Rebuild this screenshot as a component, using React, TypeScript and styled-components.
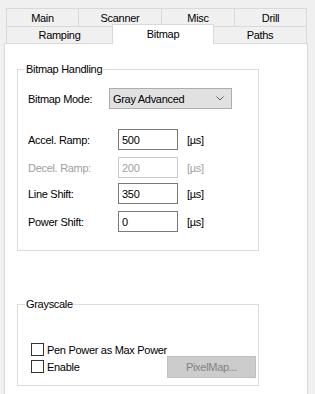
import React from "react";
import styled, { createGlobalStyle } from "styled-components";

const GlobalStyle = createGlobalStyle`
  html, body {
    margin: 0;
    padding: 0;
    background: #f0f0f0;
  }
  body {
    font-family: "Liberation Sans", Arial, sans-serif;
    font-size: 11px;
    letter-spacing: -0.3px;
    color: #000;
  }
`;

const Page = styled.div`
  box-sizing: border-box;
  width: 315px;
  height: 394px;
  overflow: hidden;
  padding: 8px 0 0 4px;
  background: #f0f0f0;
`;

const TabStrip = styled.div`
  margin-left: 2px;
`;

const TabRow = styled.div<{ $second?: boolean }>`
  display: flex;
  align-items: flex-start;
  height: ${(p) => (p.$second ? 18 : 19)}px;
  margin-top: ${(p) => (p.$second ? -1 : 0)}px;
`;

const Tab = styled.div<{ $w: number; $h: number; $active?: boolean }>`
  box-sizing: border-box;
  display: flex;
  align-items: center;
  justify-content: center;
  flex: none;
  width: ${(p) => p.$w}px;
  height: ${(p) => (p.$active ? 20 : p.$h)}px;
  margin-left: -1px;
  margin-top: ${(p) => (p.$active ? -2 : 0)}px;
  padding-bottom: ${(p) => (p.$active ? 2 : 0)}px;
  border: 1px solid #d9d9d9;
  border-bottom: ${(p) => (p.$active ? "none" : "1px solid #d9d9d9")};
  background: ${(p) => (p.$active ? "#fff" : "#f0f0f0")};
  position: ${(p) => (p.$active ? "relative" : "static")};
  z-index: ${(p) => (p.$active ? 1 : "auto")};
  &:first-child {
    margin-left: 0;
  }
`;

const Panel = styled.div`
  box-sizing: border-box;
  width: 304px;
  height: 360px;
  margin-top: -1px;
  padding: 19px 0 0 12px;
  background: #fff;
  border: 1px solid #d9d9d9;
`;

const Group = styled.fieldset<{ $h: number; $gap?: number }>`
  box-sizing: border-box;
  width: 242px;
  height: ${(p) => p.$h}px;
  min-width: 0;
  margin: ${(p) => p.$gap ?? 0}px 0 0 0;
  padding: 0 0 0 10px;
  border: 1px solid #dcdcdc;
`;

const Legend = styled.legend`
  margin-left: -3px;
  padding: 0 1px;
  line-height: 13px;
`;

const ModeRow = styled.div`
  display: flex;
  align-items: center;
  margin-top: 12px;
  height: 21px;
`;

const ModeLabel = styled.span`
  width: 81px;
  flex: none;
`;

const Select = styled.div`
  box-sizing: border-box;
  display: flex;
  align-items: center;
  justify-content: space-between;
  width: 123px;
  height: 21px;
  padding: 0 7px 0 3px;
  background: #e1e1e1;
  border: 1px solid #adadad;
`;

const FieldRow = styled.div<{ $gap: number; $disabled?: boolean }>`
  display: grid;
  grid-template-columns: 90px 60px auto;
  align-items: center;
  height: 21px;
  margin-top: ${(p) => p.$gap}px;
  color: ${(p) => (p.$disabled ? "#a0a0a0" : "#000")};
`;

const TextBox = styled.div<{ $disabled?: boolean }>`
  box-sizing: border-box;
  height: 21px;
  padding: 0 3px;
  display: flex;
  align-items: center;
  background: #fff;
  border: 1px solid ${(p) => (p.$disabled ? "#cccccc" : "#7a7a7a")};
`;

const Unit = styled.span`
  margin-left: 9px;
`;

const Checks = styled.div`
  margin-top: 30px;
  padding-left: 3px;
  padding-right: 2px;
`;

const CheckRow = styled.div`
  display: flex;
  align-items: center;
  justify-content: space-between;
  height: 17px;
`;

const CheckLabel = styled.label`
  display: flex;
  align-items: center;
  gap: 3px;
`;

const Box = styled.span`
  box-sizing: border-box;
  width: 13px;
  height: 13px;
  background: #fff;
  border: 1px solid #333;
`;

const Button = styled.div`
  box-sizing: border-box;
  display: flex;
  align-items: center;
  justify-content: center;
  width: 89px;
  height: 22px;
  background: #cccccc;
  border: 1px solid #bfbfbf;
  color: #838383;
`;

const Chevron = () => (
  <svg width="8" height="5" viewBox="0 0 8 5">
    <polyline points="0.5,0.5 4,4 7.5,0.5" fill="none" stroke="#606060" strokeWidth="1" />
  </svg>
);

const fields = [
  { label: "Accel. Ramp:", value: "500", gap: 20 },
  { label: "Decel. Ramp:", value: "200", gap: 7, disabled: true },
  { label: "Line Shift:", value: "350", gap: 5 },
  { label: "Power Shift:", value: "0", gap: 7 },
];

export default function App() {
  return (
    <Page>
      <GlobalStyle />
      <TabStrip>
        <TabRow>
          <Tab $w={73} $h={19}>Main</Tab>
          <Tab $w={84} $h={19}>Scanner</Tab>
          <Tab $w={74} $h={19}>Misc</Tab>
          <Tab $w={73} $h={19}>Drill</Tab>
        </TabRow>
        <TabRow $second>
          <Tab $w={107} $h={18}>Ramping</Tab>
          <Tab $w={102} $h={18} $active>Bitmap</Tab>
          <Tab $w={94} $h={18}>Paths</Tab>
        </TabRow>
      </TabStrip>
      <Panel>
        <Group $h={188}>
          <Legend>Bitmap Handling</Legend>
          <ModeRow>
            <ModeLabel>Bitmap Mode:</ModeLabel>
            <Select>
              <span>Gray Advanced</span>
              <Chevron />
            </Select>
          </ModeRow>
          {fields.map((f) => (
            <FieldRow key={f.label} $gap={f.gap} $disabled={f.disabled}>
              <span>{f.label}</span>
              <TextBox $disabled={f.disabled}>{f.value}</TextBox>
              <Unit>[µs]</Unit>
            </FieldRow>
          ))}
        </Group>
        <Group $h={88} $gap={47}>
          <Legend>Grayscale</Legend>
          <Checks>
            <CheckRow>
              <CheckLabel>
                <Box />
                Pen Power as Max Power
              </CheckLabel>
            </CheckRow>
            <CheckRow>
              <CheckLabel>
                <Box />
                Enable
              </CheckLabel>
              <Button>PixelMap...</Button>
            </CheckRow>
          </Checks>
        </Group>
      </Panel>
    </Page>
  );
}
